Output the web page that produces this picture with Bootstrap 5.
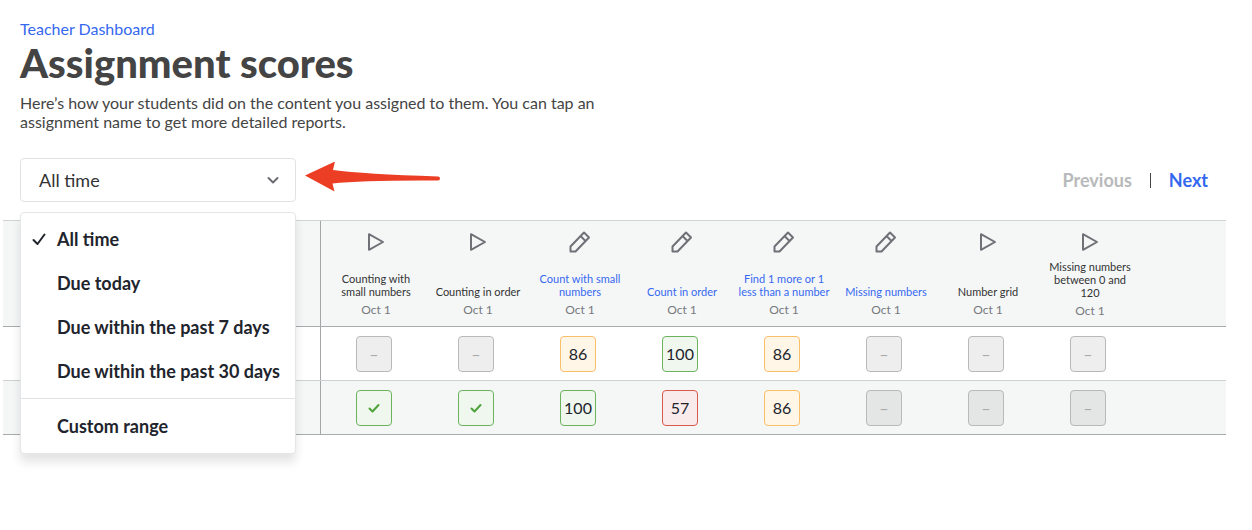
<!DOCTYPE html>
<html lang="en">
<head>
<meta charset="utf-8">
<meta name="viewport" content="width=device-width, initial-scale=1">
<title>Assignment scores</title>
<link href="https://cdn.jsdelivr.net/npm/bootstrap@5.3.0/dist/css/bootstrap.min.css" rel="stylesheet">
<style>
  body { font-family: Lato, "Liberation Sans", sans-serif; color: #444; background: #fff; }
  a { color: #3568f0; text-decoration: none; }
  a:hover { text-decoration: underline; }
  .page { padding: 19px 26px 24px 3px; }
  .page-head, .toolbar { padding-left: 17px; }
  .crumb { font-size: 16px; line-height: 20px; }
  .page-title { font-size: 40px; line-height: 48px; font-weight: 900; color: #444; }
  .intro { font-size: 16px; line-height: 19px; max-width: 580px; margin-top: 6px; }
  .toolbar { margin-top: 27px; margin-bottom: 18px; }
  .range { width: 276px; }
  .range .form-select {
    height: 44px; padding: 0 18px; font-size: 18px; color: #333; border-color: #e0e2e4; border-radius: 4px;
    background-image: none;
  }
  .range-caret { position: absolute; right: 16px; top: 15px; pointer-events: none; }
  .range .dropdown-menu {
    top: 100%; left: 0; width: 100%; margin-top: 10px; padding: 4px 0 5px; border-color: #e4e6e8;
    border-radius: 4px; box-shadow: 0 8px 10px rgba(33, 36, 44, .12);
  }
  .range .dropdown-item {
    padding: 0 0 0 10px; gap: 10px; height: 44px; font-size: 18px; line-height: 24px; font-weight: 700; color: #21242c;
  }
  .range .dropdown-item svg { flex: none; }
  .range .dropdown-divider { margin: 5px 0; border-color: #e0e2e4; }
  .pager { font-size: 18px; line-height: 24px; padding-right: 18px; gap: 18px; font-weight: 700; }
  .pager .btn { font-size: 18px; line-height: 24px; font-weight: 700; color: #b8b9bb; opacity: 1; }
  .pager-bar { width: 1px; height: 15px; background: #444; }
  .scores { table-layout: fixed; width: 100%; border-collapse: collapse; }
  .scores tr { border: 0 solid #a8aaad; border-bottom-width: 1px; }
  .scores thead tr { border-top: 1px solid #d0d2d4; height: 106px; }
  .scores tbody tr { height: 54px; }
  .scores tbody tr:first-child { border-bottom-color: #cfd0d3; }
  .scores thead, .scores tbody tr:nth-child(even) { background: #f5f7f7; }
  .col-student { width: 320px; }
  .col-score { width: 102px; }
  .student { position: relative; }
  .student::after { content: ""; position: absolute; top: 0; bottom: 0; right: 2px; width: 1px; background: #a3a5a9; }
  .scores thead th { vertical-align: top; padding: 7px 3px 0 7px; text-align: center; font-weight: 400; }
  .task-name { min-height: 38px; margin-top: 6px; font-size: 11px; line-height: 13px; color: #333; }
  .task-date { font-size: 12px; line-height: 16px; margin-top: 4px; color: #77797d; }
  .scores td { padding: 0; text-align: center; vertical-align: middle; }
  .score {
    display: flex; align-items: center; justify-content: center; width: 36px; height: 36px; margin: 0 auto;
    border: 1px solid; border-radius: 4px; font-size: 16px; line-height: 20px; color: #21242c;
  }
  .score-none { background: rgba(33, 36, 44, .08); border-color: #b8b9bb; color: #aaa; }
  .score-good { background: #eff7ef; border-color: #6db35e; }
  .score-fair { background: #fff6e8; border-color: #fbc067; }
  .score-poor { background: #f9ebeb; border-color: #db5750; }
</style>
</head>
<body>
<svg class="d-none" aria-hidden="true">
  <symbol id="play" viewBox="0 0 24 24"><path d="M5 4.200v15.600L19 12z" fill="none" stroke="#6f7177" stroke-width="2" stroke-linejoin="round"/></symbol>
  <symbol id="pencil" viewBox="0 0 24 24"><path d="M2.500 21.500v-5L16 2.500l5 5L7.500 21.500zM12.500 6l5 5" fill="none" stroke="#6f7177" stroke-width="2" stroke-linejoin="round"/></symbol>
  <symbol id="done" viewBox="0 0 14 14"><path d="M2.500 7.500l3 3 6-6.500" fill="none" stroke="#4fa33a" stroke-width="2" stroke-linecap="round" stroke-linejoin="round"/></symbol>
</svg>
<main class="page min-vh-100">
  <header class="page-head">
    <a class="crumb d-block" href="#">Teacher Dashboard</a>
    <h1 class="page-title mb-0">Assignment scores</h1>
    <p class="intro mb-0">Here’s how your students did on the content you assigned to them. You can tap an assignment name to get more detailed reports.</p>
  </header>

  <div class="toolbar d-flex align-items-center">
    <div class="range position-relative">
      <select class="form-select" aria-label="Due date range">
        <option selected>All time</option>
        <option>Due today</option>
        <option>Due within the past 7 days</option>
        <option>Due within the past 30 days</option>
        <option>Custom range</option>
      </select>
      <svg class="range-caret" width="14" height="14" viewBox="0 0 14 14" aria-hidden="true"><path d="M2.500 5l4.500 4.500L11.500 5" fill="none" stroke="#6a6c72" stroke-width="2" stroke-linecap="round" stroke-linejoin="round"/></svg>
      <div class="dropdown-menu show">
        <button type="button" class="dropdown-item d-flex align-items-center"><svg width="16" height="16" viewBox="0 0 16 16" aria-hidden="true"><path d="M2.500 9l4 4L13.500 3.500" fill="none" stroke="#21242c" stroke-width="2" stroke-linecap="round" stroke-linejoin="round"/></svg>All time</button>
        <button type="button" class="dropdown-item d-flex align-items-center"><svg width="16" height="16" aria-hidden="true"></svg>Due today</button>
        <button type="button" class="dropdown-item d-flex align-items-center"><svg width="16" height="16" aria-hidden="true"></svg>Due within the past 7 days</button>
        <button type="button" class="dropdown-item d-flex align-items-center"><svg width="16" height="16" aria-hidden="true"></svg>Due within the past 30 days</button>
        <hr class="dropdown-divider">
        <button type="button" class="dropdown-item d-flex align-items-center"><svg width="16" height="16" aria-hidden="true"></svg>Custom range</button>
      </div>
    </div>
    <svg class="ms-2" width="140" height="36" viewBox="0 0 140 36" aria-hidden="true"><path d="M1 13.500L31 -.5 29 8Q60 12 134 14.500 136 14.500 136 16.500T134 18.500Q60 18 28.500 21.500L30.500 29.500z" fill="#ec3e24"/></svg>
    <nav class="pager d-flex align-items-center ms-auto" aria-label="Pages">
      <button type="button" class="btn border-0 p-0" disabled>Previous</button>
      <span class="pager-bar"></span>
      <a href="#">Next</a>
    </nav>
  </div>

  <table class="scores">
    <colgroup><col class="col-student"><col class="col-score" span="8"><col></colgroup>
    <thead>
      <tr>
        <th class="student" scope="col"></th>
        <th scope="col"><svg width="24" height="24"><use href="#play"/></svg><div class="task-name d-flex align-items-end justify-content-center">Counting with small numbers</div><div class="task-date">Oct 1</div></th>
        <th scope="col"><svg width="24" height="24"><use href="#play"/></svg><div class="task-name d-flex align-items-end justify-content-center">Counting in order</div><div class="task-date">Oct 1</div></th>
        <th scope="col"><svg width="24" height="24"><use href="#pencil"/></svg><div class="task-name d-flex align-items-end justify-content-center"><a href="#">Count with small numbers</a></div><div class="task-date">Oct 1</div></th>
        <th scope="col"><svg width="24" height="24"><use href="#pencil"/></svg><div class="task-name d-flex align-items-end justify-content-center"><a href="#">Count in order</a></div><div class="task-date">Oct 1</div></th>
        <th scope="col"><svg width="24" height="24"><use href="#pencil"/></svg><div class="task-name d-flex align-items-end justify-content-center"><a href="#">Find 1 more or 1 less than a number</a></div><div class="task-date">Oct 1</div></th>
        <th scope="col"><svg width="24" height="24"><use href="#pencil"/></svg><div class="task-name d-flex align-items-end justify-content-center"><a href="#">Missing numbers</a></div><div class="task-date">Oct 1</div></th>
        <th scope="col"><svg width="24" height="24"><use href="#play"/></svg><div class="task-name d-flex align-items-end justify-content-center">Number grid</div><div class="task-date">Oct 1</div></th>
        <th scope="col"><svg width="24" height="24"><use href="#play"/></svg><div class="task-name d-flex align-items-end justify-content-center">Missing numbers between 0 and 120</div><div class="task-date">Oct 1</div></th>
        <th></th>
      </tr>
    </thead>
    <tbody>
      <tr>
        <th class="student" scope="row"></th>
        <td><span class="score score-none">–</span></td>
        <td><span class="score score-none">–</span></td>
        <td><span class="score score-fair">86</span></td>
        <td><span class="score score-good">100</span></td>
        <td><span class="score score-fair">86</span></td>
        <td><span class="score score-none">–</span></td>
        <td><span class="score score-none">–</span></td>
        <td><span class="score score-none">–</span></td>
        <td></td>
      </tr>
      <tr>
        <th class="student" scope="row"></th>
        <td><span class="score score-good"><svg width="14" height="14" role="img" aria-label="Done"><use href="#done"/></svg></span></td>
        <td><span class="score score-good"><svg width="14" height="14" role="img" aria-label="Done"><use href="#done"/></svg></span></td>
        <td><span class="score score-good">100</span></td>
        <td><span class="score score-poor">57</span></td>
        <td><span class="score score-fair">86</span></td>
        <td><span class="score score-none">–</span></td>
        <td><span class="score score-none">–</span></td>
        <td><span class="score score-none">–</span></td>
        <td></td>
      </tr>
    </tbody>
  </table>
</main>
<script src="https://cdn.jsdelivr.net/npm/bootstrap@5.3.0/dist/js/bootstrap.bundle.min.js"></script>
</body>
</html>
